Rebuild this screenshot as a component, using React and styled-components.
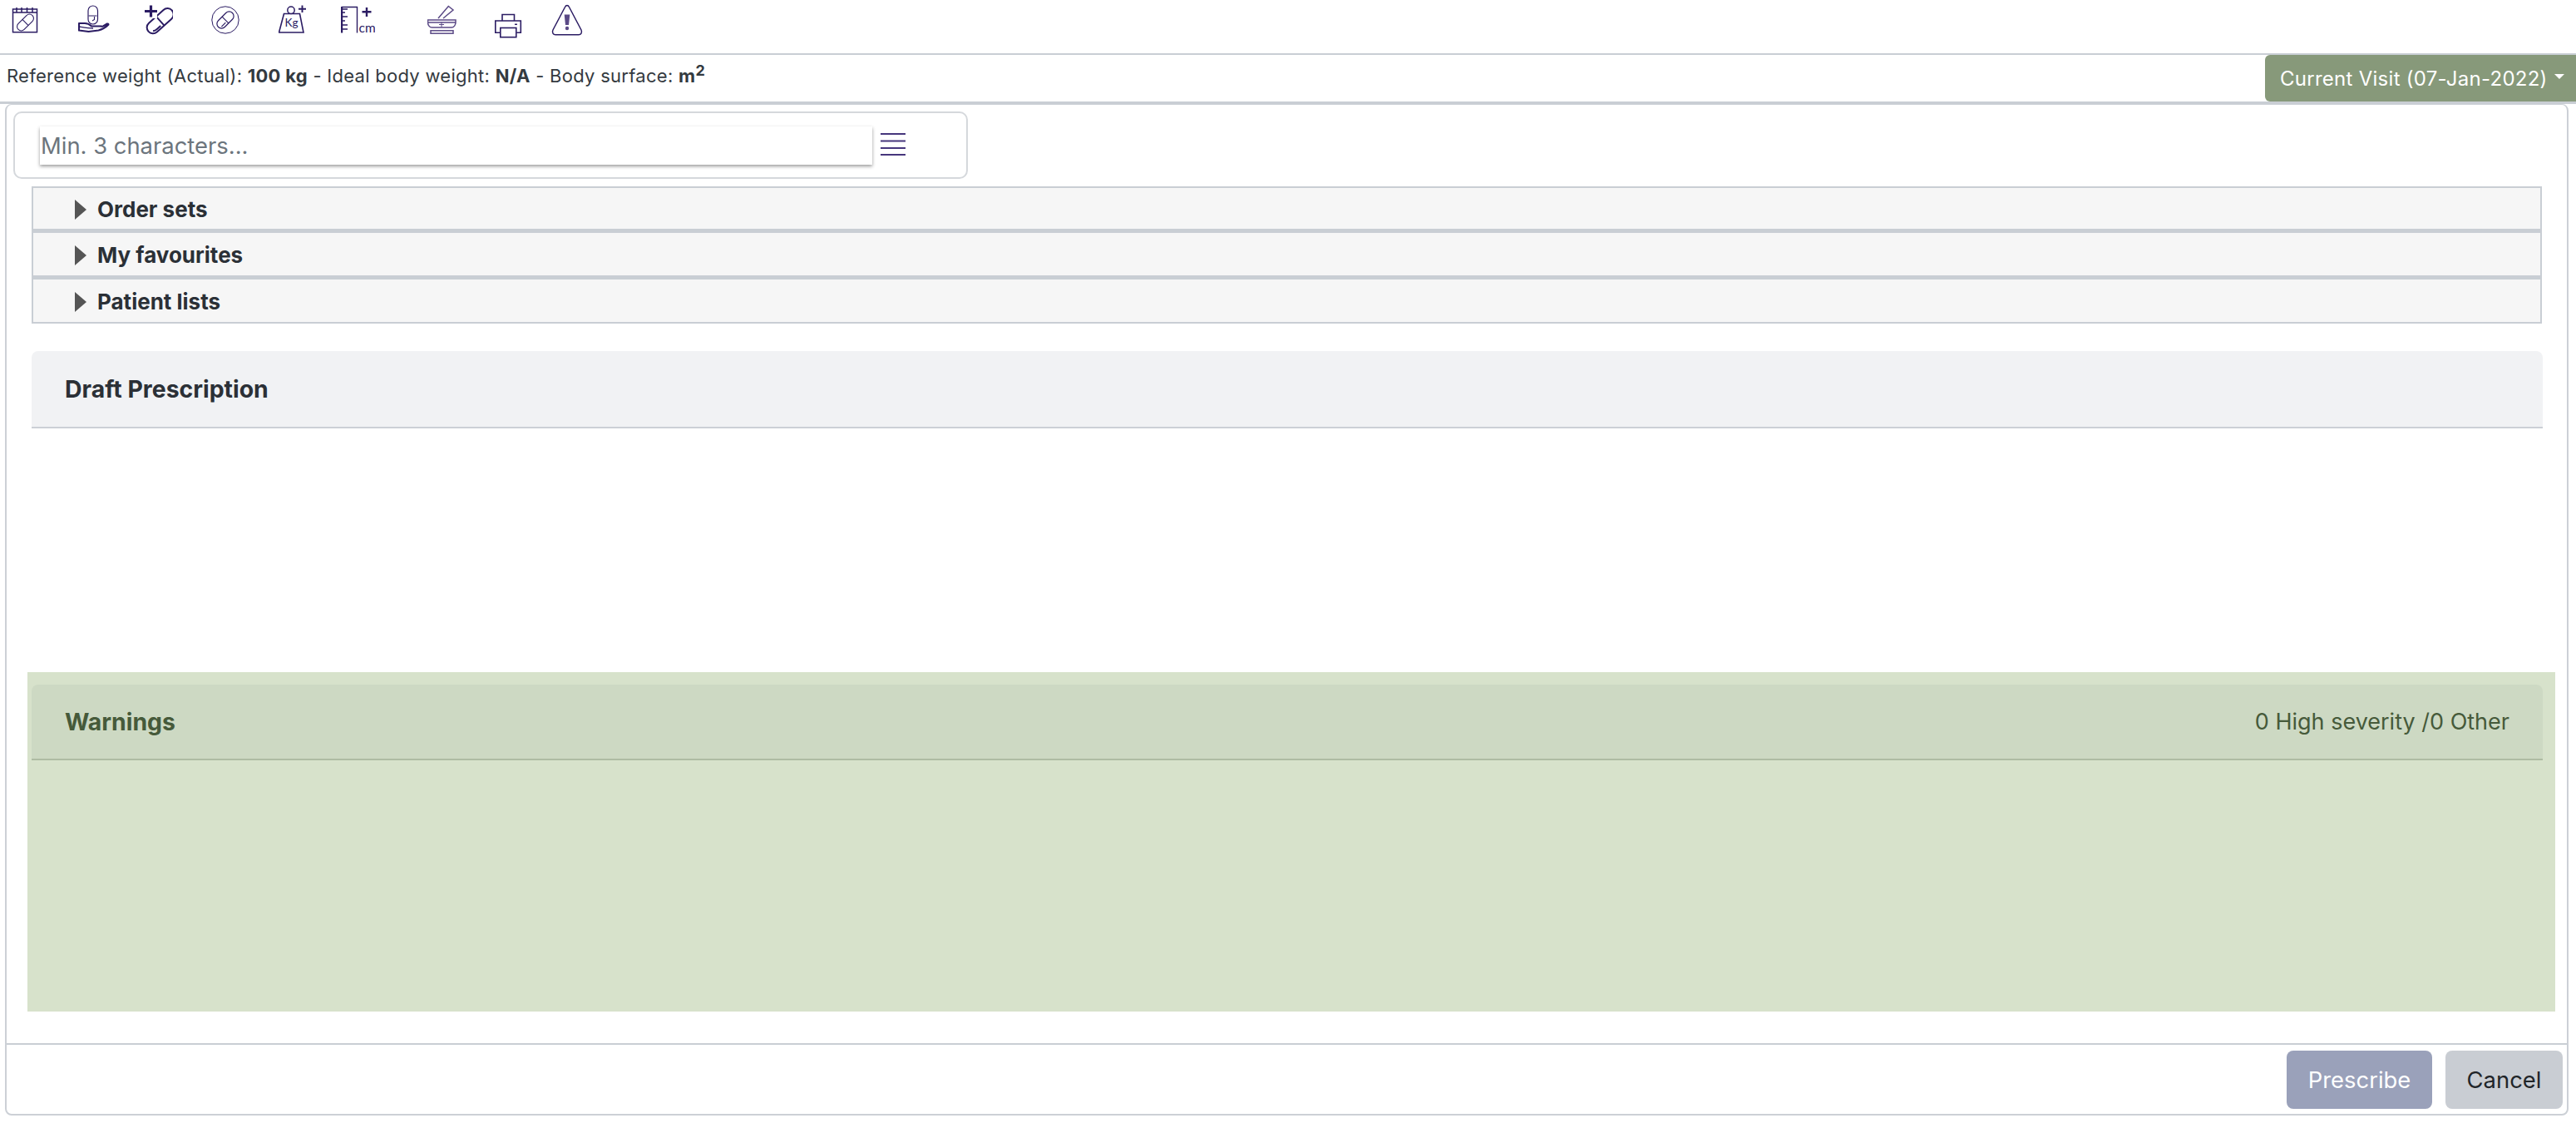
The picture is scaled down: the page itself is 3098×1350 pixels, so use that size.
import React from 'react';
import styled, { createGlobalStyle } from 'styled-components';

const GlobalStyle = createGlobalStyle`
  html, body {
    margin: 0;
    padding: 0;
    background: #fff;
    font-family: Inter, "Liberation Sans", sans-serif;
    color: #343a40;
  }
  * { box-sizing: border-box; }
`;

const Page = styled.div`
  width: 3098px;
  height: 1350px;
  display: flex;
  flex-direction: column;
  overflow: hidden;
`;

const Toolbar = styled.div`
  height: 66px;
  flex: none;
  display: flex;
  align-items: flex-start;
  padding-left: 14px;
  border-bottom: 2px solid #c9ced4;
`;

const ToolIcon = styled.svg`
  display: block;
  flex: none;
  height: 48px;
  width: ${(p) => p.$w}px;
  margin-right: ${(p) => p.$gap || 0}px;
  fill: none;
  stroke: ${(p) => (p.$light ? '#5b4a86' : '#2b1c63')};
  stroke-width: ${(p) => p.$sw || 1.5};
  text { fill: #2b1c63; stroke: none; font-family: Lato, sans-serif; }
`;

const InfoRow = styled.div`
  height: 59px;
  flex: none;
  display: flex;
  justify-content: space-between;
  align-items: flex-start;
  border-bottom: 3px solid #c9ced4;
`;

const RefText = styled.div`
  padding: 10px 0 0 8px;
  font-size: 22px;
  line-height: 30px;
  letter-spacing: 0.28px;
  b { font-weight: 700; }
  sup { font-size: 18px; line-height: 0; font-weight: 700; }
`;

const VisitButton = styled.div`
  width: 374px;
  height: 56px;
  flex: none;
  display: flex;
  align-items: center;
  padding-left: 18px;
  gap: 8px;
  background: #87997a;
  color: #fff;
  font-size: 24px;
  letter-spacing: 0.27px;
  border-radius: 6px 0 0 6px;
`;

const Caret = styled.span`
  width: 0;
  height: 0;
  margin-top: -5px;
  border-left: 6px solid transparent;
  border-right: 6px solid transparent;
  border-top: 6px solid #fff;
`;

const Card = styled.div`
  flex: 1;
  margin: 0 9px 9px 6px;
  display: flex;
  flex-direction: column;
  border: 2px solid #ccd0d6;
  border-top-width: 1px;
  border-radius: 8px;
`;

const SearchBox = styled.div`
  width: 1148px;
  height: 81px;
  margin: 8px 0 0 8px;
  padding: 16px 0 0 30px;
  display: flex;
  align-items: flex-start;
  border: 2px solid #d5d8dc;
  border-radius: 10px;
`;

const SearchInput = styled.input`
  width: 1001px;
  height: 46px;
  padding: 0 0 0 1px;
  border: none;
  outline: none;
  background: #fff;
  box-shadow: 0 2px 4px rgba(0, 0, 0, 0.4);
  font-family: Inter, sans-serif;
  font-size: 27.4px;
  &::placeholder { color: #6c757d; opacity: 1; }
`;

const MenuIcon = styled.svg`
  width: 30px;
  height: 32px;
  margin: 6px 0 0 10px;
  stroke: #46367c;
  stroke-width: 2;
`;

const Accordion = styled.div`
  margin: 9px 0 0 30px;
  width: 3019px;
  display: flex;
  flex-direction: column;
`;

const AccordionRow = styled.div`
  height: ${(p) => (p.$last ? 53 : 56)}px;
  display: flex;
  align-items: center;
  padding: 2px 0 0 50px;
  gap: 13px;
  background: #f6f6f6;
  border: 2px solid #c9ced4;
  border-bottom-width: ${(p) => (p.$last ? 2 : 5)}px;
  border-top-width: ${(p) => (p.$first ? 2 : 0)}px;
  font-size: 26px;
  font-weight: 700;
  color: #2b3036;
`;

const Arrow = styled.span`
  width: 0;
  height: 0;
  border-top: 12px solid transparent;
  border-bottom: 12px solid transparent;
  border-left: 14px solid #555;
`;

const PanelHeader = styled.div`
  height: ${(p) => p.$h}px;
  display: flex;
  align-items: center;
  justify-content: space-between;
  padding: 0 40px;
  font-size: 27px;
  border-radius: 8px 8px 0 0;
  background: ${(p) => (p.$green ? '#cdd9c3' : '#f1f2f4')};
  border-bottom: 2px solid ${(p) => (p.$green ? '#aebca3' : '#ccd0d6')};
  color: ${(p) => (p.$green ? '#465a3a' : '#2b3036')};
  b { font-weight: 700; font-size: 28.4px; }
`;

const DraftPanel = styled.div`
  margin: 33px 0 0 30px;
  width: 3020px;
  height: 386px;
`;

const WarningsPanel = styled.div`
  margin-left: 25px;
  width: 3040px;
  height: 408px;
  padding: 15px 15px 0 5px;
  background: #d7e2cb;
`;

const Footer = styled.div`
  margin-top: auto;
  height: 85px;
  display: flex;
  justify-content: flex-end;
  gap: 16px;
  padding: 7px 5px 0 0;
  border-top: 2px solid #c9ced4;
`;

const ActionButton = styled.div`
  width: ${(p) => p.$w}px;
  height: 70px;
  display: flex;
  align-items: center;
  justify-content: center;
  border-radius: 8px;
  font-size: 27.4px;
  background: ${(p) => (p.$primary ? '#9aa1ba' : '#c9cdd3')};
  color: ${(p) => (p.$primary ? '#fff' : '#212529')};
`;

const Icons = () => (
  <>
    {/* calendar with pill */}
    <ToolIcon $w={32} $gap={48} viewBox="14 0 32 48">
      <rect x="15.5" y="11" width="29" height="27.7" />
      <path d="M15 15h30M20 9v6M26 9v6M32.5 9v6M39 9v6" />
      <g transform="rotate(-45 30.5 27)" strokeWidth="1.1">
        <rect x="18.5" y="22" width="24" height="10" rx="5" />
        <path d="M30.5 22v10" />
      </g>
    </ToolIcon>
    {/* pill over hand */}
    <ToolIcon $w={38} $gap={42} viewBox="94 0 38 48">
      <rect x="106" y="7" width="11.5" height="22" rx="5.7" strokeWidth="1.2" />
      <path strokeWidth="1.1" d="M106.5 19h10M113.5 20v3.5l-2.5 1.5" />
      <path strokeWidth="2.1" strokeLinejoin="round" d="M95 28h7c4 0 6 1.5 8 3.5h10c2 0 3 .5 4 0l5-3c1.5 0 2 1 .5 2-3 3-7 5-11 6l-12 1.500-11.500-1.500z" />
      <path strokeWidth="1.4" d="M95 32c6 1 11 2 17 2" />
    </ToolIcon>
    {/* pill plus */}
    <ToolIcon $w={34} $gap={46} viewBox="174 0 34 48">
      <g transform="rotate(-42 192.5 25)" strokeWidth="2">
        <rect x="173.5" y="18" width="38" height="14.5" rx="7.2" />
        <path d="M192.5 18v14.5M178 28.500c0 0 2 1.500 5 1.500h6" />
      </g>
      <rect x="172" y="4" width="17" height="18" fill="#fff" stroke="none" />
      <path strokeWidth="3.2" d="M181.5 6.5v14M174 13.5h15" />
    </ToolIcon>
    {/* circled pill */}
    <ToolIcon $w={34} $gap={47} $sw={1} viewBox="254 0 34 48">
      <circle cx="271" cy="24" r="16.2" />
      <g transform="rotate(-45 271 24)" strokeWidth="1.2">
        <rect x="259" y="18.5" width="24" height="11" rx="5.5" />
        <path d="M271 18.5v11M262 26.5h7" />
      </g>
    </ToolIcon>
    {/* weight plus */}
    <ToolIcon $w={34} $gap={41} viewBox="335 0 34 48">
      <path strokeWidth="1.6" d="M341.500 16.500h19L365 39h-29.500z" />
      <circle cx="350" cy="12.3" r="4.2" fill="#fff" />
      <path strokeWidth="1.9" d="M363.500 6.500v8.500M359 10.700h9" />
      <text x="342.5" y="32" fontSize="13.5">Kg</text>
    </ToolIcon>
    {/* ruler plus */}
    <ToolIcon $w={41} $gap={63} viewBox="410 0 41 48">
      <path strokeWidth="1.4" d="M411 8.500h19M429.500 8v31.500" />
      <path strokeWidth="2.4" d="M411 8v31.500" />
      <path strokeWidth="1.6" d="M411 11h7M411 15h4M411 20h7M411 25h4M411 30h7M411 35h7" />
      <path strokeWidth="2.4" d="M441 9v11M435.500 14.300h11" />
      <text x="431.5" y="38.7" fontSize="15.5">cm</text>
    </ToolIcon>
    {/* mortar */}
    <ToolIcon $w={35} $gap={46} $light viewBox="513 0 35 48">
      <path d="M513.500 24h33.500v3c0 3-2 6-5 6h-23.500c-3 0-5-3-5-6zM513.500 27h33.500" />
      <path strokeWidth="1" d="M530 26.500v6M527 29.500h6" />
      <path d="M526 22l12.300-14.500 5.700 4.500-12 10" />
      <rect x="517" y="36.8" width="27" height="3.4" />
    </ToolIcon>
    {/* printer */}
    <ToolIcon $w={33} $gap={35} $sw={1.6} viewBox="594 0 33 48">
      <path d="M603 25v-7.500h14.500V25M600.500 39.300h-5.700V25h30.500v14.300h-5" />
      <rect x="600.8" y="33.5" width="19" height="11.2" fill="#fff" />
      <path strokeWidth="1.5" d="M618 29.300h3" />
    </ToolIcon>
    {/* warning */}
    <ToolIcon $w={38} viewBox="661 0 38 48">
      <path strokeLinejoin="round" d="M677.500 8.500c1.200-2.700 3.800-2.700 5 0l14.500 27.500c1.500 3-.5 5.800-3 5.800h-28c-2.500 0-4.500-2.800-3-5.800z" />
      <path fill="#5b4a86" stroke="none" d="M676.700 17.500h6.600l-1.300 12.500h-4z" />
      <circle cx="680" cy="34" r="2.2" fill="#5b4a86" stroke="none" />
    </ToolIcon>
  </>
);

const App = () => {
  return (
    <Page>
      <GlobalStyle />
      <Toolbar>
        <Icons />
      </Toolbar>
      <InfoRow>
        <RefText>
          Reference weight (Actual): <b>100 kg</b> - Ideal body weight: <b>N/A</b> - Body surface: <b>m<sup>2</sup></b>
        </RefText>
        <VisitButton>
          Current Visit (07-Jan-2022)
          <Caret />
        </VisitButton>
      </InfoRow>
      <Card>
        <SearchBox>
          <SearchInput placeholder="Min. 3 characters..." readOnly />
          <MenuIcon viewBox="0 0 30 32">
            <path d="M0 3h30M0 11.500h30M0 20h30M0 28h30" />
          </MenuIcon>
        </SearchBox>
        <Accordion>
          <AccordionRow $first><Arrow />Order sets</AccordionRow>
          <AccordionRow><Arrow />My favourites</AccordionRow>
          <AccordionRow $last><Arrow />Patient lists</AccordionRow>
        </Accordion>
        <DraftPanel>
          <PanelHeader $h={93}><b>Draft Prescription</b></PanelHeader>
        </DraftPanel>
        <WarningsPanel>
          <PanelHeader $h={91} $green>
            <b>Warnings</b>
            <span>0 High severity /0 Other</span>
          </PanelHeader>
        </WarningsPanel>
        <Footer>
          <ActionButton $primary $w={175}>Prescribe</ActionButton>
          <ActionButton $w={141}>Cancel</ActionButton>
        </Footer>
      </Card>
    </Page>
  );
};

export default App;
